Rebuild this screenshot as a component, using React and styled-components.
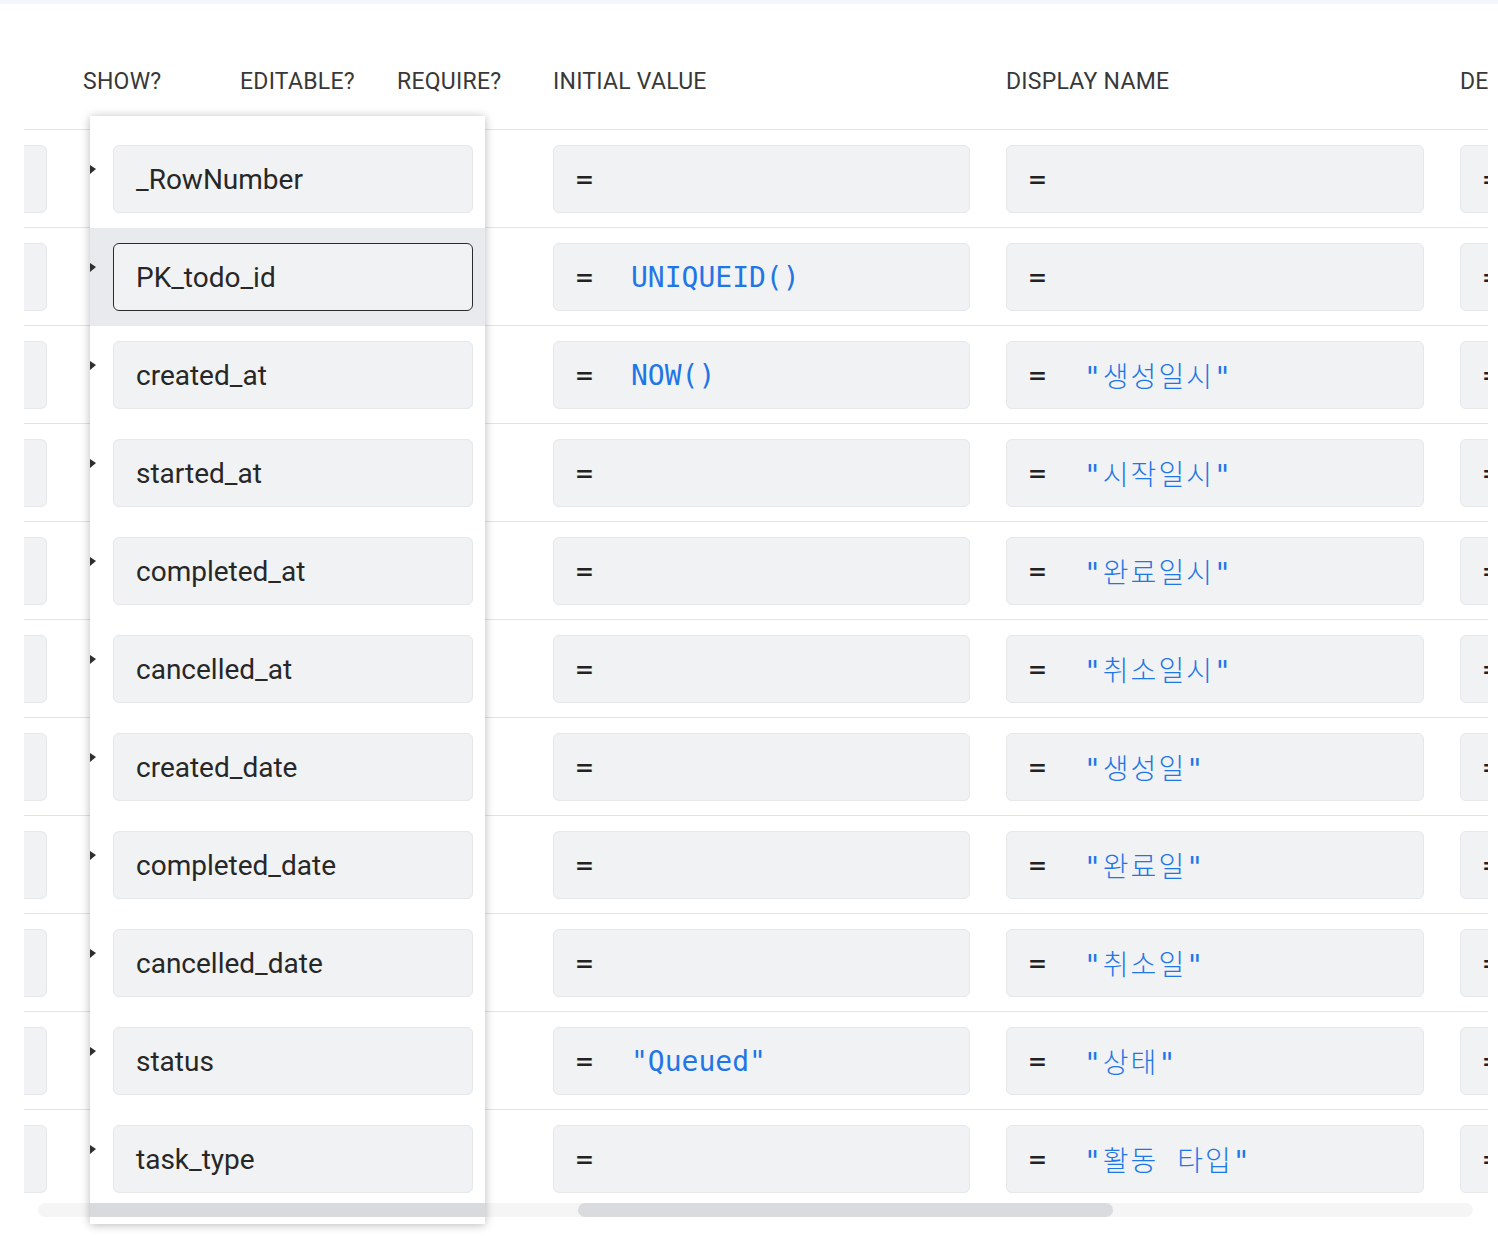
import React from 'react'
import styled, { createGlobalStyle } from 'styled-components'

const GlobalStyle = createGlobalStyle`
    html, body {
        margin:0;
        padding:0;
        background:#ffffff;
        font-family:Roboto, "Noto Sans", sans-serif;
    }
`

const columns = [
    { key: 'prev', label: '' },
    { key: 'show', label: 'SHOW?' },
    { key: 'editable', label: 'EDITABLE?' },
    { key: 'require', label: 'REQUIRE?' },
    { key: 'initial', label: 'INITIAL VALUE' },
    { key: 'display', label: 'DISPLAY NAME' },
    { key: 'desc', label: 'DESCRIPTION' }
]

const rows = [
    { name: '_RowNumber', initial: '', display: '' },
    { name: 'PK_todo_id', initial: 'UNIQUEID()', display: '', active: true },
    { name: 'created_at', initial: 'NOW()', display: '"생성일시"' },
    { name: 'started_at', initial: '', display: '"시작일시"' },
    { name: 'completed_at', initial: '', display: '"완료일시"' },
    { name: 'cancelled_at', initial: '', display: '"취소일시"' },
    { name: 'created_date', initial: '', display: '"생성일"' },
    { name: 'completed_date', initial: '', display: '"완료일"' },
    { name: 'cancelled_date', initial: '', display: '"취소일"' },
    { name: 'status', initial: '"Queued"', display: '"상태"' },
    { name: 'task_type', initial: '', display: '"활동 타입"' }
]

// korean labels render a touch wider than the latin formulas
const Formula = ({ value, wide }) => (
    <FormulaBox>
        <Eq>=</Eq>
        {value && <Value $wide={wide}>{value}</Value>}
    </FormulaBox>
)

const App = () => {
    return (
        <>
            <GlobalStyle />
            <TopStrip />
            <ScrollArea>
                <Viewport>
                    <Table $offset={159}>
                        <HeaderRow>
                            {columns.map(col => (
                                <HeaderCell key={col.key}>{col.label}</HeaderCell>
                            ))}
                        </HeaderRow>
                        {rows.map(row => (
                            <Row key={row.name}>
                                <Cell><FormulaBox /></Cell>
                                <Cell />
                                <Cell />
                                <Cell />
                                <Cell><Formula value={row.initial} /></Cell>
                                <Cell><Formula value={row.display} wide /></Cell>
                                <Cell><Formula value="" /></Cell>
                            </Row>
                        ))}
                    </Table>
                </Viewport>

                <ScrollTrack>
                    <ScrollThumb />
                </ScrollTrack>

                <NamePanel>
                    {rows.map(row => (
                        <PanelRow key={row.name} $active={row.active}>
                            <Marker />
                            <NameInput $active={row.active}>{row.name}</NameInput>
                        </PanelRow>
                    ))}
                    <PanelScroll />
                </NamePanel>
            </ScrollArea>
        </>
    )
}

export default App


const TopStrip = styled.div`
    height:4px;
    background:#f3f6fc;
`

const ScrollArea = styled.div`
    position:relative;
    margin:0 10px 0 24px;
    height:1232px;
`

const Viewport = styled.div`
    overflow:hidden;
    height:1201px;
`

const Table = styled.div`
    margin-left:${p => -p.$offset}px;
    width:max-content;
`

const grid = `
    display:grid;
    grid-template-columns:200px 157px 157px 156px 453px 454px 453px;
`

const HeaderRow = styled.div`
    ${grid}
    height:125px;
    border-bottom:1px solid #e2e3e6;
`

const HeaderCell = styled.div`
    padding:64px 18px 0;
    font-size:23px;
    line-height:28px;
    letter-spacing:0.25px;
    color:#383838;
    white-space:nowrap;
`

const Row = styled.div`
    ${grid}
    height:97px;
    border-bottom:1px solid #e2e3e6;
`

const Cell = styled.div`
    padding:15px 18px 0;
`

const FormulaBox = styled.div`
    display:flex;
    align-items:center;
    box-sizing:border-box;
    height:68px;
    padding-left:22px;
    background:#f1f2f4;
    border:1px solid #e6e7ea;
    border-radius:6px;
    font-family:"DejaVu Sans Mono", "Noto Sans CJK KR", monospace;
    font-size:28px;
    white-space:nowrap;
    overflow:hidden;
`

const Eq = styled.span`
    display:inline-block;
    width:55px;
    color:#222222;
    flex-shrink:0;
`

const Value = styled.span`
    color:#1f76e6;
    font-weight:300;
    letter-spacing:${p => p.$wide ? '2px' : '0'};
`

const ScrollTrack = styled.div`
    position:absolute;
    left:14px;
    right:15px;
    top:1199px;
    height:14px;
    border-radius:7px;
    background:#f5f5f6;
`

const ScrollThumb = styled.div`
    margin-left:540px;
    width:535px;
    height:100%;
    border-radius:7px;
    background:#dadbdf;
`

const NamePanel = styled.div`
    position:absolute;
    left:66px;
    top:112px;
    width:395px;
    height:1108px;
    box-sizing:border-box;
    padding-top:14px;
    background:#ffffff;
    box-shadow:0 1px 9px rgba(0,0,0,0.28);
    overflow:hidden;
    z-index:2;
`

const PanelRow = styled.div`
    position:relative;
    height:98px;
    box-sizing:border-box;
    padding:15px 12px 0 23px;
    background:${p => p.$active ? '#e9eaed' : 'transparent'};
`

const Marker = styled.span`
    position:absolute;
    left:0;
    top:35px;
    width:0;
    height:0;
    border-left:6px solid #2f2f2f;
    border-top:4px solid transparent;
    border-bottom:5px solid transparent;
`

const NameInput = styled.div`
    box-sizing:border-box;
    height:68px;
    padding-left:22px;
    display:flex;
    align-items:center;
    background:#f1f2f4;
    border:1px solid ${p => p.$active ? '#2b2b2b' : '#e6e7ea'};
    border-radius:6px;
    font-size:28px;
    color:#272727;
`

const PanelScroll = styled.div`
    position:absolute;
    left:0;
    right:0;
    bottom:7px;
    height:14px;
    background:#d9dadd;
`
